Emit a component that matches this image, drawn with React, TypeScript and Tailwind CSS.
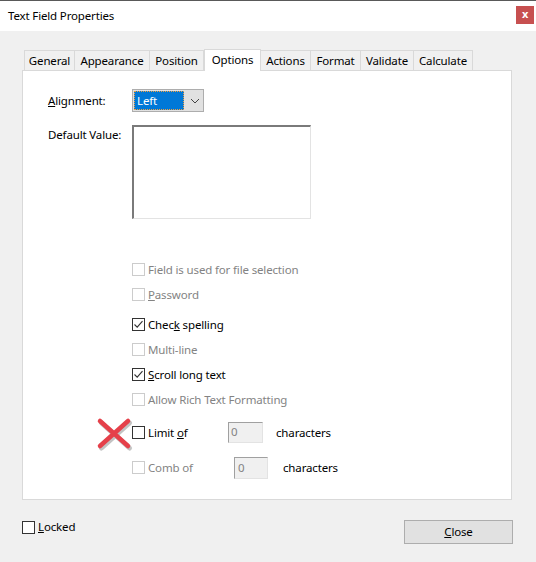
import React from "react";

const font = { fontFamily: '"Segoe UI", "Noto Sans", "Liberation Sans", sans-serif' };

function Box({ checked, disabled }: { checked?: boolean; disabled?: boolean }) {
  return (
    <div
      className={
        "w-[13px] h-[13px] bg-white border flex items-center justify-center shrink-0 " +
        (disabled ? "border-[#cccccc]" : "border-[#333333]")
      }
    >
      {checked && (
        <svg width="11" height="11" viewBox="0 0 11 11">
          <path d="M1.5 5.5 L4.2 8.2 L9.5 2.2" fill="none" stroke="#333" strokeWidth="1.1" />
        </svg>
      )}
    </div>
  );
}

function Row({
  children,
  checked,
  disabled,
  className = "",
}: {
  children: React.ReactNode;
  checked?: boolean;
  disabled?: boolean;
  className?: string;
}) {
  return (
    <div className={"h-[25px] flex items-center " + className}>
      <Box checked={checked} disabled={disabled} />
      <span className={"ml-[3px] " + (disabled ? "text-[#838383]" : "text-black")}>{children}</span>
    </div>
  );
}

const tabs = ["General", "Appearance", "Position", "Options", "Actions", "Format", "Validate", "Calculate"];
const tabW = [51, 75, 54, 57, 50, 50, 53, 59];

export default function App() {
  return (
    <div
      className="w-[536px] h-[562px] bg-[#f0f0f0] border-t border-[#595959] relative text-[11.5px] tracking-[-0.15px] text-black"
      style={font}
    >
      <div className="h-[30px] bg-white flex items-center justify-between pl-[8px] pr-[2px]">
        <span className="text-[11.5px]">Text Field Properties</span>
        <div className="w-[18px] h-[18px] bg-[#c75050] flex items-center justify-center text-white text-[11px] font-bold mt-[-3px]">
          x
        </div>
      </div>
      <div className="pl-[22px] pt-[17px]">
        <div className="flex items-end h-[22px] pl-[2px]">
          {tabs.map((t, i) =>
            t === "Options" ? (
              <div
                key={t}
                style={{ width: tabW[i] }}
                className="h-[22px] bg-white border border-b-0 border-[#d9d9d9] flex items-center justify-center relative z-10 mb-[-1px] pb-[2px]"
              >
                {t}
              </div>
            ) : (
              <div
                key={t}
                style={{ width: tabW[i] }}
                className="h-[20px] bg-[#f0f0f0] border border-b-0 border-[#d9d9d9] border-l-0 first:border-l flex items-center justify-center"
              >
                {t}
              </div>
            )
          )}
        </div>
        <div className="w-[490px] h-[430px] bg-white border border-[#d9d9d9] pl-[25px] pt-[18px]">
          <div className="flex items-center h-[23px]">
            <span className="w-[84px]">
              <span className="underline">A</span>lignment:
            </span>
            <div className="w-[72px] h-[23px] bg-[#e1e1e1] border border-[#adadad] flex items-center pl-[1px]">
              <div className="w-[50px] h-[19px] bg-[#0078d7] text-white flex items-center pl-[3px] outline-1 outline-dotted outline-[#f0a040] -outline-offset-1">
                Left
              </div>
              <svg width="10" height="6" viewBox="0 0 10 6" className="ml-[6px]">
                <path d="M1 1 L5 5 L9 1" fill="none" stroke="#444" strokeWidth="1" />
              </svg>
            </div>
          </div>
          <div className="flex mt-[13px]">
            <span className="w-[84px] mt-[1px]">Default Value:</span>
            <div className="w-[179px] h-[94px] bg-white border-2 border-t-[#7a7a7a] border-l-[#7a7a7a] border-r-[#e3e3e3] border-b-[#e3e3e3] border-r-1 border-b-1" />
          </div>
          <div className="pl-[84px] mt-[38px]">
            <Row disabled>Field is used for file selection</Row>
            <Row disabled>
              <span className="underline">P</span>assword
            </Row>
            <Row checked className="mt-[5px]">
              Chec<span className="underline">k</span> spelling
            </Row>
            <Row disabled>Multi-line</Row>
            <Row checked>
              <span className="underline">S</span>croll long text
            </Row>
            <Row disabled>Allow Rich Text Formatting</Row>
            <div className="h-[25px] flex items-center mt-[8px]">
              <Box />
              <span className="ml-[3px] w-[80px]">
                Limit <span className="underline">o</span>f
              </span>
              <div className="w-[35px] h-[21px] bg-[#f0f0f0] border border-t-[#a0a0a0] border-l-[#a0a0a0] border-r-[#e3e3e3] border-b-[#e3e3e3] text-[#838383] pl-[2px] leading-[18px]">
                0
              </div>
              <span className="ml-[13px]">characters</span>
            </div>
            <div className="h-[25px] flex items-center mt-[10px]">
              <Box disabled />
              <span className="ml-[3px] w-[86px] text-[#838383]">Comb of</span>
              <div className="w-[34px] h-[22px] bg-[#f0f0f0] border border-t-[#a0a0a0] border-l-[#a0a0a0] border-r-[#e3e3e3] border-b-[#e3e3e3] text-[#838383] pl-[3px] leading-[19px]">
                0
              </div>
              <span className="ml-[15px]">characters</span>
            </div>
          </div>
        </div>
      </div>
      <div className="flex items-start justify-between pl-[22px] pr-[23px] mt-[20px]">
        <div className="flex items-center h-[14px]">
          <div className="w-[13px] h-[13px] bg-white border border-[#333333]" />
          <span className="ml-[3px]">
            <span className="underline">L</span>ocked
          </span>
        </div>
        <div className="w-[109px] h-[24px] bg-[#e1e1e1] border border-[#adadad] flex items-center justify-center">
          <span>
            <span className="underline">C</span>lose
          </span>
        </div>
      </div>
      <svg className="absolute left-[95px] top-[415px]" width="40" height="36" viewBox="0 0 40 36">
        <g opacity="0.35" transform="translate(1.5,2)">
          <path d="M5 5 L33 30 M33 5 L5 30" stroke="#555" strokeWidth="5" strokeLinecap="round" />
        </g>
        <path d="M5 5 L33 30 M33 5 L5 30" stroke="#e5404a" strokeWidth="4.5" strokeLinecap="round" />
      </svg>
    </div>
  );
}
